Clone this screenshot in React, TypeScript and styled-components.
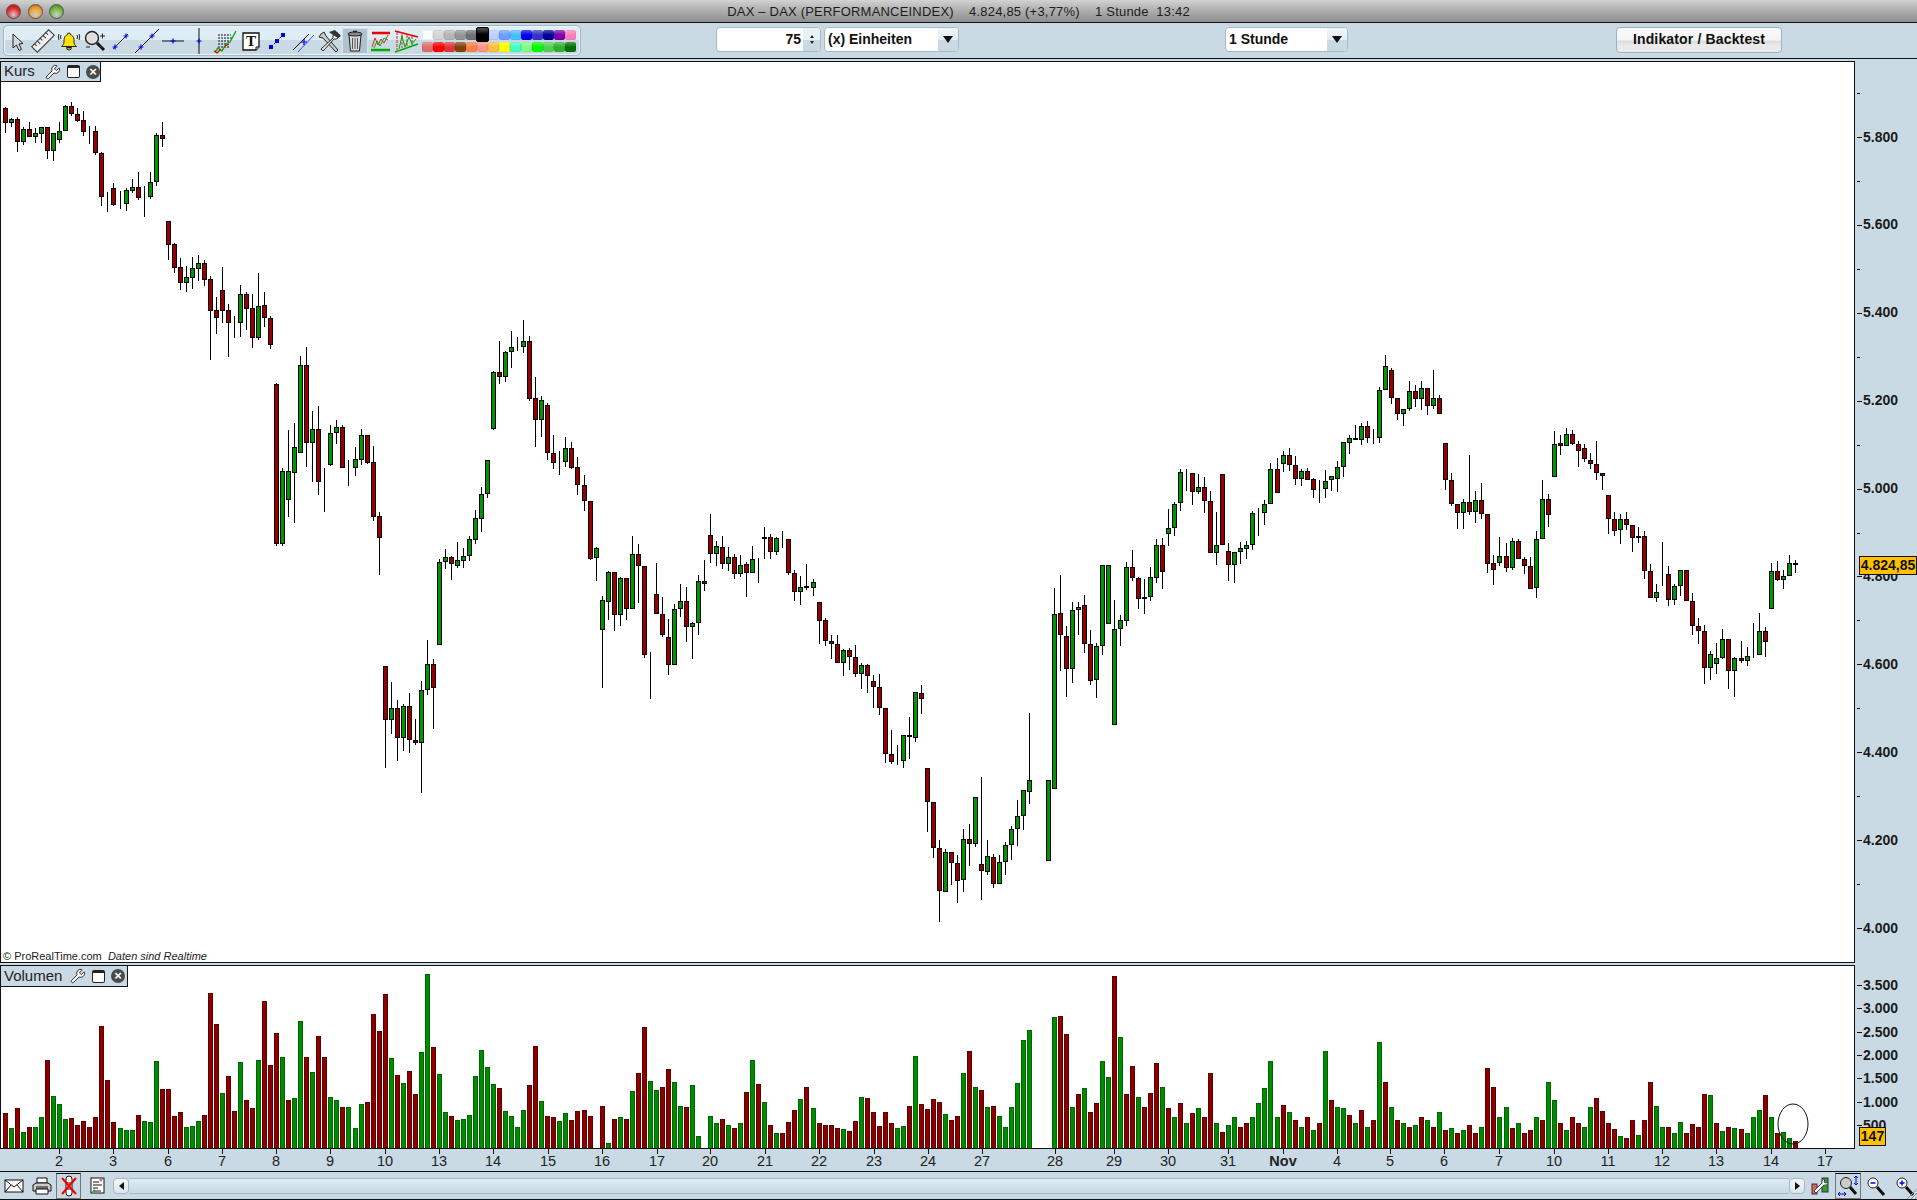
import React from 'react';
import styled, { createGlobalStyle } from 'styled-components';
import { Wrench } from 'lucide-react';

type Row = [number, string, number, number, number, number];
type Seg = { x: number; y: number; rows: Row[] };

// candle rows: x, colour, high, body top, body bottom, low (measured at 3x from the segment origin)
const candleSegs: Seg[] = [
  { x: 0, y: 90, rows: [
    [16,'r',52,55,98,128],[34,'g',84,88,98,110],[52,'r',82,88,155,185],[70,'g',112,118,155,164],[88,'r',96,118,140,140],
    [106,'g',114,130,140,158],[124,'g',112,112,131,158],[142,'r',112,112,182,206],[160,'g',130,130,182,212],[178,'g',96,124,149,158],
    [196,'g',46,49,124,124],[214,'r',37,49,73,77],[232,'r',55,73,92,95],[250,'r',64,91,125,137],[268,'d',108,124,125,161],
    [286,'r',108,124,188,194],[304,'r',186,190,320,347],[322,'d',307,320,322,365],[340,'r',280,295,344,348],[361,'d',304,340,343,356],
    [379,'g',294,301,341,362],[397,'g',267,292,302,308],[415,'r',246,292,323,329],[433,'d',289,320,322,380],[451,'g',246,277,320,326],
    [469,'g',130,136,275,287],[487,'r',97,136,146,170],[505,'r',394,394,464,509],[523,'r',460,463,533,548],[541,'r',504,532,578,599],
    [559,'g',529,562,578,605],[577,'g',502,535,563,596],[595,'g',496,520,536,572],[613,'r',511,520,569,587],[631,'r',559,568,662,809],
    [649,'r',622,661,685,731],[667,'r',532,601,662,698],[685,'r',643,661,698,800],[703,'d',679,696,698,743],[721,'g',586,613,698,740],
    [739,'r',607,613,656,719],[757,'r',613,655,743,773],[775,'g',550,649,743,749],[793,'r',607,646,685,710],[811,'r',679,685,764,776],
    [829,'r',880,883,1362,1368],[847,'g',1135,1143,1362,1368],[865,'g',1020,1143,1230,1280],[883,'g',1000,1070,1150,1300],
  ] },
  { x: 300, y: 320, rows: [
    [1,'g',108,136,398,398],[19,'r',82,136,370,440],[37,'g',274,328,370,485],[55,'r',259,328,485,524],[73,'d',445,484,487,575],
    [91,'g',316,340,434,437],[109,'g',301,322,340,371],[127,'r',316,322,443,443],[145,'d',420,439,442,497],[166,'g',382,418,443,467],
    [184,'g',328,346,419,434],[202,'r',346,346,428,431],[220,'r',379,427,590,602],[238,'r',577,589,653,764],[256,'r',1039,1039,1201,1343],
    [274,'g',1087,1165,1201,1241],[292,'r',1141,1165,1253,1322],[310,'g',1153,1159,1253,1292],[328,'r',1120,1159,1261,1298],[346,'r',1198,1261,1268,1274],
    [364,'g',1084,1111,1268,1418],[382,'g',961,1033,1111,1124],[400,'r',1018,1033,1105,1226],[418,'g',718,727,976,976],[436,'g',688,712,727,746],
    [454,'r',709,712,733,779],[472,'g',667,721,737,743],[490,'g',685,709,722,743],[508,'g',649,658,709,722],[526,'g',571,595,659,671],
    [544,'g',502,523,596,635],[562,'g',421,421,521,533],[580,'g',154,157,326,329],[598,'r',64,157,172,191],[616,'g',94,97,170,185],
    [634,'g',34,82,97,143],[652,'d',52,79,82,92],[670,'g',0,64,80,98],[688,'r',49,64,236,242],[706,'r',172,235,301,380],
    [724,'g',229,241,301,350],[742,'r',250,256,400,419],[760,'r',346,400,430,446],[778,'d',394,427,430,464],[796,'g',352,385,427,440],
    [814,'r',367,385,443,446],[832,'r',412,442,496,524],[853,'r',466,496,544,572],[871,'r',544,544,716,719],[889,'g',682,685,715,782],
    [907,'g',829,841,931,1103],[925,'g',754,757,845,899],[943,'r',757,757,886,932],
  ] },
  { x: 620, y: 500, rows: [
    [1,'g',232,235,346,377],[19,'r',235,235,328,359],[37,'g',109,163,328,328],[55,'r',133,163,199,310],[73,'r',199,199,466,473],
    [91,'d',457,460,463,596],[109,'r',190,283,343,343],[127,'r',292,343,406,410],[145,'r',358,412,496,524],[163,'g',313,328,496,496],
    [181,'g',253,304,328,350],[199,'r',262,304,382,425],[217,'g',367,370,382,476],[235,'g',226,244,370,404],[253,'r',181,244,253,272],
    [271,'r',43,106,163,188],[289,'g',124,139,163,197],[307,'r',109,142,193,206],[325,'g',142,172,193,212],[343,'r',163,172,223,236],
    [361,'g',166,196,223,230],[379,'r',187,193,220,290],[397,'g',139,178,220,220],[415,'d',175,180,182,248],[433,'g',82,112,118,176],
    [451,'r',103,112,157,176],[469,'g',112,115,157,164],[487,'d',94,115,118,143],[505,'r',118,118,220,224],[523,'r',211,220,277,302],
    [541,'g',229,262,277,314],[559,'r',193,259,265,269],[580,'g',238,247,265,287],[598,'r',307,307,364,431],[616,'r',355,361,424,437],
    [634,'r',406,424,433,476],[652,'r',406,433,490,490],[670,'g',448,451,490,527],[688,'r',445,451,472,509],[706,'r',436,472,523,530],
    [724,'g',490,496,523,566],[742,'r',493,496,529,578],[760,'r',526,544,562,623],[778,'r',523,562,625,644],[796,'r',625,625,763,788],
    [814,'r',691,763,787,791],[832,'d',736,785,788,794],[850,'g',706,706,784,803],[868,'r',652,706,712,776],[886,'g',577,577,715,725],
    [904,'r',556,580,598,641],[922,'r',805,805,907,997],[940,'r',907,907,1045,1075],[958,'r',1021,1045,1174,1265],
  ] },
  { x: 940, y: 440, rows: [
    [16,'g',1228,1237,1357,1357],[34,'r',1237,1237,1270,1334],[52,'r',1246,1270,1324,1388],[70,'g',1168,1198,1321,1355],[88,'r',1153,1198,1213,1277],
    [106,'g',1072,1072,1213,1220],[124,'r',1012,1273,1294,1379],[142,'g',1201,1249,1297,1304],[160,'r',1243,1252,1333,1343],[178,'g',1246,1267,1333,1333],
    [196,'g',1207,1216,1267,1304],[214,'g',1159,1168,1216,1259],[232,'g',1081,1129,1168,1217],[250,'g',1051,1051,1129,1169],[268,'g',820,1021,1057,1091],
    [325,'g',1021,1021,1264,1264],[343,'g',445,523,1048,1048],[361,'r',406,520,586,692],[379,'r',559,589,688,770],[397,'g',487,511,688,728],
    [415,'g',487,502,511,585],[433,'r',466,496,613,638],[451,'r',571,613,724,734],[469,'g',610,619,721,773],[487,'g',376,376,619,644],
    [505,'g',376,376,553,553],[523,'g',481,568,856,856],[541,'g',526,541,568,617],[559,'g',367,382,544,557],[577,'r',331,382,415,422],
    [595,'r',412,415,478,506],[613,'g',418,472,478,521],[631,'g',382,412,472,482],[649,'g',298,316,415,428],[667,'r',295,316,397,446],
    [685,'g',208,265,283,317],[703,'g',187,193,265,287],[721,'g',88,97,190,212],[739,'d',88,97,100,152],[757,'r',100,100,157,194],
    [775,'g',103,142,157,163],[793,'r',112,142,184,218],[811,'r',154,184,340,340],[829,'g',217,316,340,374],[847,'r',103,103,316,316],
    [865,'r',310,334,376,422],[883,'g',337,337,376,428],[901,'g',307,325,337,371],[919,'g',304,316,328,356],[937,'g',214,220,316,329],
    [955,'d',205,217,220,287],
  ] },
  { x: 1260, y: 340, rows: [
    [13,'g',480,493,520,554],[31,'g',370,388,493,493],[52,'r',355,388,460,460],[70,'g',334,346,373,397],[88,'r',325,346,376,392],
    [106,'r',349,376,418,434],[124,'g',388,394,418,437],[142,'r',385,394,421,421],[160,'r',415,418,451,473],[178,'d',421,448,451,488],
    [196,'g',391,424,448,473],[214,'g',408,409,421,452],[232,'g',364,382,418,455],[250,'g',307,307,382,410],[268,'g',286,295,310,341],
    [286,'r',256,295,301,301],[304,'g',250,259,301,314],[322,'r',244,259,295,308],[340,'d',268,294,296,311],[358,'g',142,151,295,308],
    [376,'g',46,79,151,151],[394,'r',85,91,175,191],[412,'r',175,175,223,239],[430,'g',208,208,223,257],[448,'g',124,154,208,212],
    [466,'r',136,154,178,200],[484,'g',124,145,178,209],[502,'r',145,145,199,224],[520,'g',91,175,199,208],[538,'r',166,175,223,223],
    [556,'r',310,310,421,449],[574,'r',400,421,493,497],[592,'r',493,493,520,566],[610,'g',478,487,520,566],[628,'r',346,487,517,524],
    [646,'g',454,481,517,548],[664,'r',430,481,523,536],[682,'r',523,523,673,698],[700,'r',646,670,691,734],[718,'g',592,649,670,677],
    [739,'r',610,649,685,695],[757,'g',595,604,685,689],[775,'r',598,604,658,658],[793,'r',652,658,679,701],[811,'r',652,679,748,748],
    [829,'g',574,598,745,773],[847,'g',421,478,598,598],[865,'r',463,478,526,560],[883,'g',274,313,412,412],[901,'r',286,310,319,344],
    [919,'g',265,283,319,319],[937,'r',271,283,313,316],[955,'r',304,313,334,380],[973,'r',313,325,358,365],[991,'r',340,361,373,386],
    [1009,'r',304,373,400,419],[1027,'r',400,400,409,449],[1045,'r',466,466,538,581],[1063,'r',517,538,574,587],
  ] },
  { x: 1600, y: 500, rows: [
    [61,'g',42,58,91,131],[79,'r',37,58,76,90],[97,'r',76,76,115,155],[115,'g',82,109,115,128],[133,'r',94,109,214,236],
    [151,'r',193,214,295,295],[169,'g',253,277,295,305],[187,'d',127,223,226,257],[205,'r',199,223,301,317],[223,'g',253,259,301,314],
    [241,'g',211,211,259,287],[259,'r',211,211,304,304],[277,'r',280,304,379,404],[295,'r',355,379,394,431],[313,'r',376,394,505,551],
    [331,'g',454,463,505,539],[349,'g',430,475,493,521],[367,'g',388,418,475,478],[385,'r',418,418,514,566],[403,'g',472,475,514,590],
    [424,'r',424,475,484,488],[442,'g',442,469,484,499],[460,'d',370,466,469,475],[478,'g',340,394,466,466],[496,'r',382,394,427,470],
    [514,'g',190,214,328,328],[532,'r',184,214,241,244],[550,'g',211,229,241,266],[568,'g',166,190,229,229],[586,'r',181,190,196,218],
  ] },
];

// volume runs: first bar x, origin y, then colour + top of bar at 3x below that origin, '-' leaves a slot empty
const volumeRuns: { x: number; y: number; bars: string }[] = [
  { x: 5, y: 940, bars: 'r520 g565 r505 g577 r562 g562 g532 r361 g469 g493 g538 r535 r556 r544 r562 r532 r259 r421 r547' },
  { x: 120, y: 940, bars: 'g565 g571 g571 r526 g544 g547 g364 r448 r448 r529 r517 g562 g559 g544 r526 r160 r253 g460 r409 r514 g367 r481 r505 g361 r184 r376 r280 g352 r481 g475 g244 r352 g397 r289 r352 g472 g481 r502 g502' },
  { x: 355, y: 940, bars: 'g565 g493 r487 r223 r274 r163 g355 r406 g430 r394 r463 g337 g103 r322 g403 g517 r529 g541 g538 g526 g409 g331 g382 g433 r445' },
  { x: 505, y: 960, bars: 'g454 g469 g502 g451 r376 r259 g424 r469 r472 g484 g460 r481 r454' },
  { x: 584, y: 960, bars: 'r451 r469 - r439 g550 r478 g472 r478 g394 r340 r202 g364 g391 r382 r328 g367 g439 r442 g376 g529 - g469 g490 r478 g496 r505 g490 r397 g301 r373 g427 r496 g520 r520 r487 r451 g418 r382' },
  { x: 813, y: 960, bars: 'g445 r490 r496 r496 r505 g508 r514 r484 g412 r415 r457 r499 r457 r490 g505 g499 r439 g289 r433 r448 r418 r427 g463 r481 r469 g340 r274 g382 r391 g442 r439 g469 g502 g442 g370 g241 g211' },
  { x: 1054, y: 960, bars: 'g172 r169 r222 g440 r402 g385 r455 r430 g303 g350 r47 g230 r402 r318 g410 r440 r400 r310 g380 r445 g470 r430 g490 r460 g445 r470 r340 g490 r515 g495 g470 r500 r490 g470 g430 g385 g303' },
  { x: 1277, y: 960, bars: 'g470 r435 g455 r480 g500 r470 g510 r490 g274 r420 g440 g445 r465 g490 r450 g500 r480 g246 r366 g440 r480 g490 r500 g495 r470 g480 r500 g455 r510 g505 r520 g510 r495 r520 g500 r325 r380 g470' },
  { x: 1506, y: 960, bars: 'g440 r505 g490 r520 r510 g470 r480 g366 g420 r490 g510 r470 r490 g500 g440 r414 r454 r490 r508 g529 r535 r481 g526 r481 r367 g439 g502 r502 g520 g487 r520 r493 r502 r403 g406 r490 g514 r502 g505' },
  { x: 1741, y: 960, bars: 'r508 g520 g472 g451 r406 g472 r520 g517 g535 r544' },
];

const dayLabels: [number, string, boolean?][] = [
  [59,'2'],[113,'3'],[168,'6'],[222,'7'],[276,'8'],[330,'9'],[385,'10'],[439,'13'],[493,'14'],[548,'15'],[602,'16'],[657,'17'],
  [710,'20'],[765,'21'],[819,'22'],[874,'23'],[928,'24'],[982,'27'],[1055,'28'],[1114,'29'],[1168,'30'],[1228,'31'],[1283,'Nov',true],
  [1337,'4'],[1390,'5'],[1444,'6'],[1499,'7'],[1554,'10'],[1608,'11'],[1662,'12'],[1716,'13'],[1771,'14'],[1825,'17'],
];

const topSwatches = ['#ffffff','#d4d4d4','#b6b6b6','#939393','#707070','#000000','#bccdff','#6d9eff','#45c0ff','#0000ee','#3434c8','#000096','#7a00aa','#ff7dbb'];
const bottomSwatches = ['#e06c6c','#ff0000','#e23434','#7f4208','#ff8044','#ff9384','#ffc040','#ffff00','#44ffc4','#80ff80','#00ff00','#50d050','#30b030','#007000'];

const PANEL = '#c9dae4';
const RED = '#980000';
const GREEN = '#009600';

const GlobalStyle = createGlobalStyle`
  html, body {
    margin: 0;
    padding: 0;
    background: ${PANEL};
    font-family: "Liberation Sans", Arial, sans-serif;
  }
  #root { height: 1200px; overflow: hidden; }
`;

const Screen = styled.div`
  width: 1917px;
  height: 1200px;
  display: flex;
  flex-direction: column;
  background: ${PANEL};
  overflow: hidden;
`;

const TitleBar = styled.div`
  position: relative;
  height: 22px;
  flex: none;
  display: flex;
  align-items: center;
  justify-content: center;
  border-bottom: 1px solid #111;
  background: linear-gradient(#d2d2d2 0, #b0b0b0 45%, #8d8d8d 100%);
`;

const TitleText = styled.span`
  font-size: 13px;
  letter-spacing: 0.2px;
  color: #1c1c1c;
  white-space: pre;
`;

const Lights = styled.div`
  position: absolute;
  left: 6px;
  top: 4px;
  display: flex;
  gap: 6.5px;
`;

const Light = styled.span<{ $c: string; $d: string }>`
  width: 15px;
  height: 15px;
  border-radius: 50%;
  border: 1px solid #555;
  box-sizing: border-box;
  background: radial-gradient(circle at 50% 75%, #fff7 0, ${(p) => p.$c} 55%, ${(p) => p.$d} 100%);
`;

const ToolBar = styled.div`
  height: 35px;
  flex: none;
  position: relative;
  display: flex;
  align-items: center;
  border-bottom: 1px solid #111;
  padding-left: 3px;
  box-sizing: content-box;
`;

const ToolGroup = styled.div`
  width: 578px;
  height: 31px;
  box-sizing: border-box;
  border: 1px solid #a3b6c4;
  border-radius: 5px;
  display: flex;
  align-items: center;
  background: linear-gradient(#e2eef6 0, #dcebf4 48%, #c9dae4 50%, #c9dae4 100%);
  box-shadow: inset 0 0 0 1px #eef5f9;
`;

const ToolButton = styled.div<{ $active?: boolean }>`
  width: 26px;
  height: 26px;
  flex: none;
  display: flex;
  align-items: center;
  justify-content: center;
  background: ${(p) => (p.$active ? '#aec3cf' : 'transparent')};
  box-shadow: ${(p) => (p.$active ? 'inset 0 0 0 1px #d5e3eb' : 'none')};
`;

const Palette = styled.div`
  display: flex;
  flex-direction: column;
  gap: 2px;
  margin-left: 2px;
`;

const SwatchRow = styled.div`
  display: flex;
`;

const Swatch = styled.span<{ $c: string; $selected?: boolean }>`
  width: 11px;
  height: 10px;
  border-radius: 2px;
  flex: none;
  box-sizing: border-box;
  background: linear-gradient(#ffffff55, #ffffff00 50%), ${(p) => p.$c};
  box-shadow: inset 0 0 0 1px #00000012;
  ${(p) => (p.$selected ? 'height: 15px; width: 13px; margin: -3px -1px -2px; border: 1px solid #000; position: relative; z-index: 1;' : '')}
`;

const StepField = styled.div`
  position: absolute;
  left: 716px;
  top: 4px;
  width: 105px;
  height: 25px;
  box-sizing: border-box;
  background: #fff;
  border: 1px solid #a8bac6;
  border-radius: 4px;
  display: flex;
  align-items: center;
  justify-content: flex-end;
  font-size: 14px;
  font-weight: bold;
  color: #111;
`;

const FieldText = styled.span`
  padding-bottom: 2px;
`;

const Spinner = styled.span`
  width: 17px;
  height: 23px;
  margin-left: 2px;
  border-radius: 0 3px 3px 0;
  background: linear-gradient(#eaf1f6 0, #eaf1f6 50%, #c9dae4 50%, #c9dae4 100%);
  display: flex;
  flex-direction: column;
  align-items: center;
  justify-content: center;
  gap: 3px;
`;

const SpinArrow = styled.i<{ $down?: boolean }>`
  width: 0;
  height: 0;
  border-left: 2px solid transparent;
  border-right: 2px solid transparent;
  ${(p) => (p.$down ? 'border-top: 3px solid #222;' : 'border-bottom: 3px solid #222;')}
`;

const SelectBox = styled.div<{ $left: number; $width: number }>`
  position: absolute;
  left: ${(p) => p.$left}px;
  top: 4px;
  width: ${(p) => p.$width}px;
  height: 25px;
  box-sizing: border-box;
  background: #fff;
  border: 1px solid #a8bac6;
  border-radius: 4px;
  display: flex;
  align-items: center;
  justify-content: space-between;
  padding-left: 3px;
  font-size: 14px;
  font-weight: bold;
  color: #111;
  white-space: nowrap;
`;

const SelectArrow = styled.span`
  width: 20px;
  height: 23px;
  border-radius: 0 3px 3px 0;
  background: linear-gradient(#f0f5f8 0, #e3edf3 50%, #c9dae4 50%, #c9dae4 100%);
  display: flex;
  align-items: center;
  justify-content: center;
  &::after {
    content: '';
    border-left: 5px solid transparent;
    border-right: 5px solid transparent;
    border-top: 7px solid #111;
  }
`;

const BacktestButton = styled.div`
  position: absolute;
  left: 1616px;
  top: 4px;
  width: 166px;
  height: 26px;
  box-sizing: border-box;
  border: 1px solid #9db2c0;
  border-radius: 4px;
  display: flex;
  align-items: center;
  justify-content: center;
  padding-bottom: 2px;
  font-size: 14px;
  font-weight: bold;
  letter-spacing: 0.15px;
  color: #111;
  background: linear-gradient(#fafafa 0, #f4f4f4 50%, #dcdcdc 55%, #e9e9e9 70%, #ebebeb 100%);
`;

const ChartRow = styled.div<{ $top: number; $height: number }>`
  flex: none;
  margin-top: ${(p) => p.$top}px;
  height: ${(p) => p.$height}px;
  display: flex;
  position: relative;
`;

const Plot = styled.div`
  width: 1854px;
  flex: none;
  position: relative;
  box-sizing: border-box;
  background: #fff;
  border: 1px solid #111;
  border-right: none;
  overflow: hidden;
`;

const PlotSvg = styled.svg`
  position: absolute;
  left: -1px;
  top: -1px;
  display: block;
`;

const AxisSvg = styled.svg`
  display: block;
  flex: none;
  border-left: 2px solid #111;
  margin-left: -1px;
  font-family: "Liberation Sans", Arial, sans-serif;
  font-size: 14px;
  font-weight: bold;
  fill: #1a1a1a;
`;

const PaneTab = styled.div<{ $width: number; $height: number }>`
  position: absolute;
  left: 0;
  top: 0;
  width: ${(p) => p.$width}px;
  height: ${(p) => p.$height}px;
  box-sizing: border-box;
  background: ${PANEL};
  border-right: 1px solid #111;
  border-bottom: 1px solid #111;
  display: flex;
  align-items: center;
  padding-left: 3px;
  font-size: 15px;
  color: #222;
`;

const PaneName = styled.span<{ $width: number }>`
  width: ${(p) => p.$width}px;
  padding-bottom: 2px;
`;

const PaneIcons = styled.div`
  display: flex;
  align-items: center;
  gap: 6px;
`;

const PaneWindow = styled.span`
  width: 13px;
  height: 13px;
  box-sizing: border-box;
  background: #fff;
  border: 1px solid #222;
  border-top-width: 3px;
  border-radius: 2px;
`;

const PaneClose = styled.span`
  width: 14px;
  height: 14px;
  border-radius: 50%;
  background: #4a4a4a;
  color: #fff;
  font-size: 13px;
  font-weight: bold;
  line-height: 14px;
  text-align: center;
`;

const Copyright = styled.div`
  position: absolute;
  left: 2px;
  bottom: -1px;
  font-size: 11px;
  line-height: 14px;
  color: #222;
  white-space: pre;
`;

const Realtime = styled.em`
  font-size: 11px;
`;

const PriceBadge = styled.div<{ $top: number; $width: number }>`
  position: absolute;
  left: 1859px;
  top: ${(p) => p.$top}px;
  width: ${(p) => p.$width}px;
  height: 19px;
  box-sizing: border-box;
  background: #ffc000;
  border: 1px solid #111;
  font-size: 14px;
  font-weight: bold;
  line-height: 17px;
  text-align: center;
  color: #111;
  white-space: nowrap;
`;

const TimeAxis = styled.svg`
  display: block;
  flex: none;
  font-family: "Liberation Sans", Arial, sans-serif;
  font-size: 14.5px;
  fill: #222;
`;

const StatusBar = styled.div`
  position: relative;
  height: 27px;
  flex: none;
  border-top: 1px solid #111;
  border-bottom: 1px solid #111;
  display: flex;
  align-items: center;
`;

const StatusGroup = styled.div`
  display: flex;
  align-items: center;
`;

const StatusButton = styled.div<{ $active?: boolean; $w?: number }>`
  width: ${(p) => p.$w ?? 28}px;
  height: 26px;
  box-sizing: border-box;
  flex: none;
  display: flex;
  align-items: center;
  justify-content: center;
  ${(p) => (p.$active ? 'border: 1px solid #777; border-top: 1px solid #111;' : '')}
`;

const ScrollEnd = styled.div`
  width: 16px;
  height: 16px;
  box-sizing: border-box;
  flex: none;
  border: 1px solid #a6b7c2;
  border-radius: 4px;
  background: linear-gradient(#f4f8fa, #d8e5ec);
  display: flex;
  align-items: center;
  justify-content: center;
`;

const ScrollArrow = styled.i<{ $right?: boolean }>`
  border-top: 4px solid transparent;
  border-bottom: 4px solid transparent;
  ${(p) => (p.$right ? 'border-left: 5px solid #111;' : 'border-right: 5px solid #111;')}
`;

const ScrollTrack = styled.div`
  width: 1660px;
  height: 16px;
  box-sizing: border-box;
  flex: none;
  border: 1px solid #a6b7c2;
  border-left: none;
  border-right: none;
  background: linear-gradient(#dcebf3, #c9dae4);
`;

const Grip = styled.svg`
  position: absolute;
  right: 0;
  bottom: 0;
`;

const TI = ({ children }: { children: React.ReactNode }) => (
  <svg width="26" height="26" viewBox="0 0 26 26">{children}</svg>
);

const blueX = (x: number, y: number, r = 2.5, c = '#0000ee') => (
  <path d={`M${x - r} ${y}H${x + r}M${x} ${y - r}V${y + r}`} stroke={c} strokeWidth="1.2" fill="none" />
);

const toolIcons: { active?: boolean; icon: React.ReactNode }[] = [
  { icon: <TI><path d="M9 6V20L12.5 17L15 22.500L17.500 21.300L15 16L19 15.500Z" fill="#d8d8d8" stroke="#222" /></TI> },
  { icon: (
    <TI>
      <g transform="rotate(-45 13 13)">
        <rect x="1" y="9" width="24" height="8" fill="#efefef" stroke="#333" />
        <path d="M5 9v3M9 9v4M13 9v3M17 9v4M21 9v3" stroke="#333" />
      </g>
    </TI>
  ) },
  { icon: (
    <TI>
      <path d="M13 5a1.500 1.500 0 0 1 1.500 1.700C18 8 18 11 18 14c0 2 1 3 2.500 4.500H5.500C7 17 8 16 8 14c0-3 0-6 3.500-7.300A1.500 1.500 0 0 1 13 5Z" fill="#ffe000" stroke="#222" />
      <path d="M10.500 19.500a2.500 2.500 0 0 0 5 0Z" fill="#d8a800" stroke="#222" />
      <path d="M3 6a7 7 0 0 0 0 6M5 7a4 4 0 0 0 0 4M23 6a7 7 0 0 1 0 6M21 7a4 4 0 0 1 0 4" stroke="#222" fill="none" />
    </TI>
  ) },
  { icon: (
    <TI>
      <circle cx="10" cy="10" r="6.500" fill="#dfdfdf" stroke="#222" strokeWidth="1.400" />
      <path d="M15 15L22 22" stroke="#111" strokeWidth="3" />
      <path d="M18 8h5M20.500 5.500v5M4 19h4" stroke="#222" />
    </TI>
  ) },
  { icon: <TI><path d="M5 21L20 6" stroke="#333" />{blueX(7, 19)}{blueX(18, 8)}</TI> },
  { icon: <TI><path d="M1 25L25 1" stroke="#111" />{blueX(7, 19)}{blueX(18, 8)}</TI> },
  { icon: <TI><path d="M2 13H24" stroke="#111" />{blueX(13, 13)}</TI> },
  { icon: <TI><path d="M13 0V26" stroke="#111" />{blueX(13, 13)}</TI> },
  { icon: (
    <TI>
      <path d="M6 7H19M6 10H21M6 13H17M6 16H14M6 19H17" stroke="#111" strokeDasharray="2 1" />
      <path d="M3 24L6 20L10 23L14 16L18 14L24 3" stroke="#00aa00" strokeWidth="1.300" fill="none" />
      <path d="M2 23L5 25L9 21M13 18L17 16" stroke="#dd0000" strokeWidth="1.300" fill="none" />
    </TI>
  ) },
  { icon: (
    <TI>
      <path d="M5 5H21V19L18 22H5Z" fill="#fff" stroke="#111" strokeWidth="1.300" />
      <path d="M21 19H18V22" fill="#ddd" stroke="#111" />
      <text x="13" y="18" textAnchor="middle" fontFamily="Liberation Serif, serif" fontWeight="bold" fontSize="15" fill="#111">T</text>
    </TI>
  ) },
  { icon: (
    <TI>
      <path d="M7 19L19 7" stroke="#0000dd" strokeDasharray="2 2" />
      <rect x="5" y="17" width="4" height="4" fill="#0000dd" />
      <rect x="17" y="5" width="4" height="4" fill="#0000dd" />
      <rect x="11" y="11" width="4" height="4" fill="#0000dd" />
    </TI>
  ) },
  { icon: (
    <TI>
      <path d="M3 22L19 6" stroke="#111" />
      <path d="M8 24L24 7" stroke="#3355dd" />
      {blueX(14, 14, 3)}
    </TI>
  ) },
  { icon: (
    <TI>
      <path d="M5 6l3-2 2 4 12 14-2 2L7 10 3 9Z" fill="#ccc" stroke="#222" />
      <path d="M22 5a4 4 0 0 0-5 5L5 21l2 2L18 11a4 4 0 0 0 5-5l-3 2-1-1Z" fill="#eee" stroke="#222" />
      <path d="M13 4l6-2 6 6-3 2-5-3Z" fill="#333" />
    </TI>
  ) },
  { active: true, icon: (
    <TI>
      <path d="M7 7L8.500 23H17.500L19 7Z" fill="#d8d8d8" stroke="#222" />
      <path d="M10.500 10V21M13 10V21M15.500 10V21" stroke="#555" />
      <ellipse cx="13" cy="6" rx="7" ry="2" fill="#888" stroke="#222" />
      <path d="M11 3.500h4" stroke="#222" strokeWidth="1.500" />
    </TI>
  ) },
  { icon: (
    <TI>
      <path d="M4 5H22" stroke="#ee0000" strokeWidth="2.500" />
      <path d="M3 22H22" stroke="#00aa00" strokeWidth="2.500" />
      <path d="M4 19L7 10L10 17L13 11L16 15L20 7" stroke="#dd2222" fill="none" />
      <path d="M6 20L9 13L12 18L16 10L20 12" stroke="#00aa00" fill="none" />
    </TI>
  ) },
  { icon: (
    <TI>
      <path d="M1 3L24 9" stroke="#ee0000" strokeWidth="1.800" />
      <path d="M1 24L24 16" stroke="#00aa00" strokeWidth="1.800" />
      <path d="M3 4V22M8 6V20M13 7V18M18 8V17" stroke="#dd2222" strokeDasharray="3 1" />
      <path d="M5 21L8 8L11 19L15 9L18 16L22 11" stroke="#00aa00" fill="none" />
    </TI>
  ) },
];

const rgb = (c: string) => (c === 'r' ? RED : c === 'g' ? GREEN : '#000');

const PriceCandles = () => (
  <>
    {candleSegs.map((seg) =>
      seg.rows.map(([x3, c, hi, top, bot, lo]) => {
        const px = Math.floor(seg.x + x3 / 3);
        const yTop = Math.round(seg.y + top / 3);
        const yBot = Math.round(seg.y + bot / 3);
        return (
          <g key={`${seg.x}-${x3}`}>
            <line x1={px + 0.5} x2={px + 0.5} y1={seg.y + hi / 3} y2={seg.y + lo / 3} stroke="#000" />
            <rect x={px - 1.5} y={yTop + 0.5} width={4} height={Math.max(yBot - yTop - 1, 0)} fill={rgb(c)} stroke="#000" />
          </g>
        );
      }),
    )}
  </>
);

const VolumeBars = () => (
  <>
    {volumeRuns.map((run) =>
      run.bars.split(' ').map((bar, i) => {
        if (bar === '-') return null;
        const top = Math.round(run.y + Number(bar.slice(1)) / 3);
        const px = run.x + i * 6;
        return (
          <rect
            key={`${run.x}-${i}`}
            x={px - 1.5}
            y={top + 0.5}
            width={4}
            height={1148 - top}
            fill={bar[0] === 'r' ? '#8c0000' : '#008c00'}
            stroke={bar[0] === 'r' ? '#5e0000' : '#006400'}
          />
        );
      }),
    )}
  </>
);

const priceMajors = [5800, 5600, 5400, 5200, 5000, 4800, 4600, 4400, 4200, 4000];
const priceY = (p: number) => 137 + ((5800 - p) * 791) / 1800;
const fmt = (n: number) => (n >= 1000 ? `${Math.floor(n / 1000)}.${String(n % 1000).padStart(3, '0')}` : String(n));

const PriceAxis = () => {
  const minors = [5900, 5700, 5500, 5300, 5100, 4900, 4700, 4500, 4300, 4100];
  return (
    <AxisSvg width="64" height="902" viewBox="1853 61 64 902">
      {minors.map((p) => (
        <line key={p} x1="1855" x2="1858" y1={Math.round(priceY(p)) + 0.5} y2={Math.round(priceY(p)) + 0.5} stroke="#111" />
      ))}
      {priceMajors.map((p) => (
        <g key={p}>
          <line x1="1855" x2="1860" y1={Math.round(priceY(p)) + 0.5} y2={Math.round(priceY(p)) + 0.5} stroke="#111" />
          <text x="1861" y={priceY(p) + 4.5}>{fmt(p)}</text>
        </g>
      ))}
    </AxisSvg>
  );
};

const VolumeAxis = () => {
  const levels = [3500, 3000, 2500, 2000, 1500, 1000, 500];
  const y = (v: number) => 985 + ((3500 - v) * 140) / 3000;
  return (
    <AxisSvg width="64" height="184" viewBox="1853 965 64 184">
      {levels.map((v) => (
        <g key={v}>
          <line x1="1855" x2="1860" y1={Math.round(y(v)) + 0.5} y2={Math.round(y(v)) + 0.5} stroke="#111" />
          <text x="1861" y={y(v) + 5}>{fmt(v)}</text>
        </g>
      ))}
    </AxisSvg>
  );
};

const PaneControls = () => (
  <PaneIcons>
    <Wrench size={16} strokeWidth={1.4} color="#222" fill="#fff" />
    <PaneWindow />
    <PaneClose>×</PaneClose>
  </PaneIcons>
);

export default function App() {
  return (
    <Screen>
      <GlobalStyle />
      <TitleBar>
        <Lights>
          <Light $c="#e8282a" $d="#8c0f12" />
          <Light $c="#f0a030" $d="#a35a10" />
          <Light $c="#70b840" $d="#3c7a1c" />
        </Lights>
        <TitleText>{'DAX – DAX (PERFORMANCEINDEX)    4.824,85 (+3,77%)    1 Stunde  13:42'}</TitleText>
      </TitleBar>

      <ToolBar>
        <ToolGroup>
          {toolIcons.map((t, i) => (
            <ToolButton key={i} $active={t.active}>{t.icon}</ToolButton>
          ))}
          <Palette>
            <SwatchRow>
              {topSwatches.map((c, i) => <Swatch key={c} $c={c} $selected={i === 5} />)}
            </SwatchRow>
            <SwatchRow>
              {bottomSwatches.map((c) => <Swatch key={c} $c={c} />)}
            </SwatchRow>
          </Palette>
        </ToolGroup>
        <StepField>
          <FieldText>75</FieldText>
          <Spinner><SpinArrow /><SpinArrow $down /></Spinner>
        </StepField>
        <SelectBox $left={824} $width={135}><FieldText>(x) Einheiten</FieldText><SelectArrow /></SelectBox>
        <SelectBox $left={1225} $width={123}><FieldText>1 Stunde</FieldText><SelectArrow /></SelectBox>
        <BacktestButton>Indikator / Backtest</BacktestButton>
      </ToolBar>

      <ChartRow $top={2} $height={902}>
        <Plot>
          <PlotSvg width="1854" height="902" viewBox="0 61 1854 902" shapeRendering="crispEdges">
            <PriceCandles />
          </PlotSvg>
          <PaneTab $width={100} $height={20}>
            <PaneName $width={41}>Kurs</PaneName>
            <PaneControls />
          </PaneTab>
          <Copyright>© ProRealTime.com  <Realtime>Daten sind Realtime</Realtime></Copyright>
        </Plot>
        <PriceAxis />
        <PriceBadge $top={495} $width={58}>4.824,85</PriceBadge>
      </ChartRow>

      <ChartRow $top={2} $height={184}>
        <Plot>
          <PlotSvg width="1854" height="184" viewBox="0 965 1854 184" shapeRendering="crispEdges">
            <VolumeBars />
            <ellipse cx="1793" cy="1124" rx="15" ry="20" fill="none" stroke="#111" shapeRendering="auto" />
          </PlotSvg>
          <PaneTab $width={127} $height={21}>
            <PaneName $width={66}>Volumen</PaneName>
            <PaneControls />
          </PaneTab>
        </Plot>
        <VolumeAxis />
        <PriceBadge $top={162} $width={27}>147</PriceBadge>
      </ChartRow>

      <TimeAxis width="1917" height="22" viewBox="0 1149 1917 22">
        {dayLabels.map(([x, label, bold]) => (
          <g key={`${x}`}>
            <line x1={x + 0.5} x2={x + 0.5} y1="1149" y2="1154" stroke="#111" />
            <text x={x} y="1166" textAnchor="middle" fontWeight={bold ? 'bold' : 'normal'}>{label}</text>
          </g>
        ))}
      </TimeAxis>

      <StatusBar>
        <StatusGroup>
          <StatusButton>
            <svg width="20" height="14" viewBox="0 0 20 14">
              <rect x="1" y="1" width="18" height="12" fill="#fff" stroke="#111" />
              <path d="M1 1L10 8L19 1M1 13L7 6M19 13L13 6" stroke="#111" fill="none" />
            </svg>
          </StatusButton>
          <StatusButton>
            <svg width="20" height="18" viewBox="0 0 20 18">
              <path d="M5 1H15V6H5Z" fill="#fff" stroke="#111" />
              <path d="M1 8L4 6H16L19 8V14H1Z" fill="#ccc" stroke="#111" />
              <path d="M4 10H16M4 12H16" stroke="#111" />
              <path d="M4 12H16V17H4Z" fill="#fff" stroke="#111" />
            </svg>
          </StatusButton>
          <StatusButton $active $w={25}>
            <svg width="20" height="22" viewBox="0 0 20 22">
              <rect x="7" y="1" width="6" height="20" rx="3" fill="#fff" stroke="#111" />
              <path d="M7 8H13M7 14H13" stroke="#111" />
              <path d="M3 3L17 19M17 3L3 19" stroke="#ee0000" strokeWidth="2" />
            </svg>
          </StatusButton>
          <StatusButton $w={32}>
            <svg width="15" height="17" viewBox="0 0 15 17">
              <rect x="1" y="1" width="13" height="15" fill="#fff" stroke="#111" />
              <path d="M3 5H9M3 8H12M3 11H8M3 14H11" stroke="#111" />
              <path d="M9 2H13L11 5Z" fill="#e06060" />
              <path d="M2 15H6L4 12Z" fill="#30a030" />
            </svg>
          </StatusButton>
        </StatusGroup>
        <ScrollEnd><ScrollArrow /></ScrollEnd>
        <ScrollTrack />
        <ScrollEnd><ScrollArrow $right /></ScrollEnd>
        <StatusGroup>
          <StatusButton $w={30}>
            <svg width="18" height="20" viewBox="0 0 18 20">
              <rect x="1" y="8" width="5" height="10" fill="#e06060" stroke="#333" />
              <rect x="11" y="2" width="6" height="14" fill="#30a030" stroke="#333" />
              <path d="M14 3a3 3 0 0 0-3 4L3 15l2 2 8-8a3 3 0 0 0 4-3l-2 1-2-1Z" fill="#fff" stroke="#444" />
            </svg>
          </StatusButton>
          <StatusButton $active $w={26}>
            <svg width="22" height="22" viewBox="0 0 22 22">
              <circle cx="9" cy="8" r="5.500" fill="#ccc" stroke="#222" />
              <path d="M13 12L19 19" stroke="#111" strokeWidth="3" />
              <path d="M1 19H9M1 19l2-2M1 19l2 2M9 19l-2-2M9 19l-2 2M19 1V10M19 1l-2 2M19 1l2 2M19 10l-2-2M19 10l2-2" stroke="#0000ee" fill="none" />
            </svg>
          </StatusButton>
          <StatusButton $w={30}>
            <svg width="20" height="22" viewBox="0 0 20 22">
              <circle cx="7" cy="8" r="5" fill="#fff" stroke="#222" />
              <path d="M4.500 8H9.500" stroke="#0000ee" strokeWidth="1.500" />
              <path d="M11 12L18 20" stroke="#111" strokeWidth="3" />
            </svg>
          </StatusButton>
          <StatusButton $w={28}>
            <svg width="20" height="22" viewBox="0 0 20 22">
              <circle cx="7" cy="8" r="5" fill="#fff" stroke="#222" />
              <path d="M4.500 8H9.500M7 5.500V10.500" stroke="#0000ee" strokeWidth="1.500" />
              <path d="M11 12L18 20" stroke="#111" strokeWidth="3" />
            </svg>
          </StatusButton>
        </StatusGroup>
        <Grip width="12" height="12" viewBox="0 0 12 12">
          <path d="M12 2L2 12M12 6L6 12M12 10L10 12" stroke="#8a9aa5" />
        </Grip>
      </StatusBar>
    </Screen>
  );
}
